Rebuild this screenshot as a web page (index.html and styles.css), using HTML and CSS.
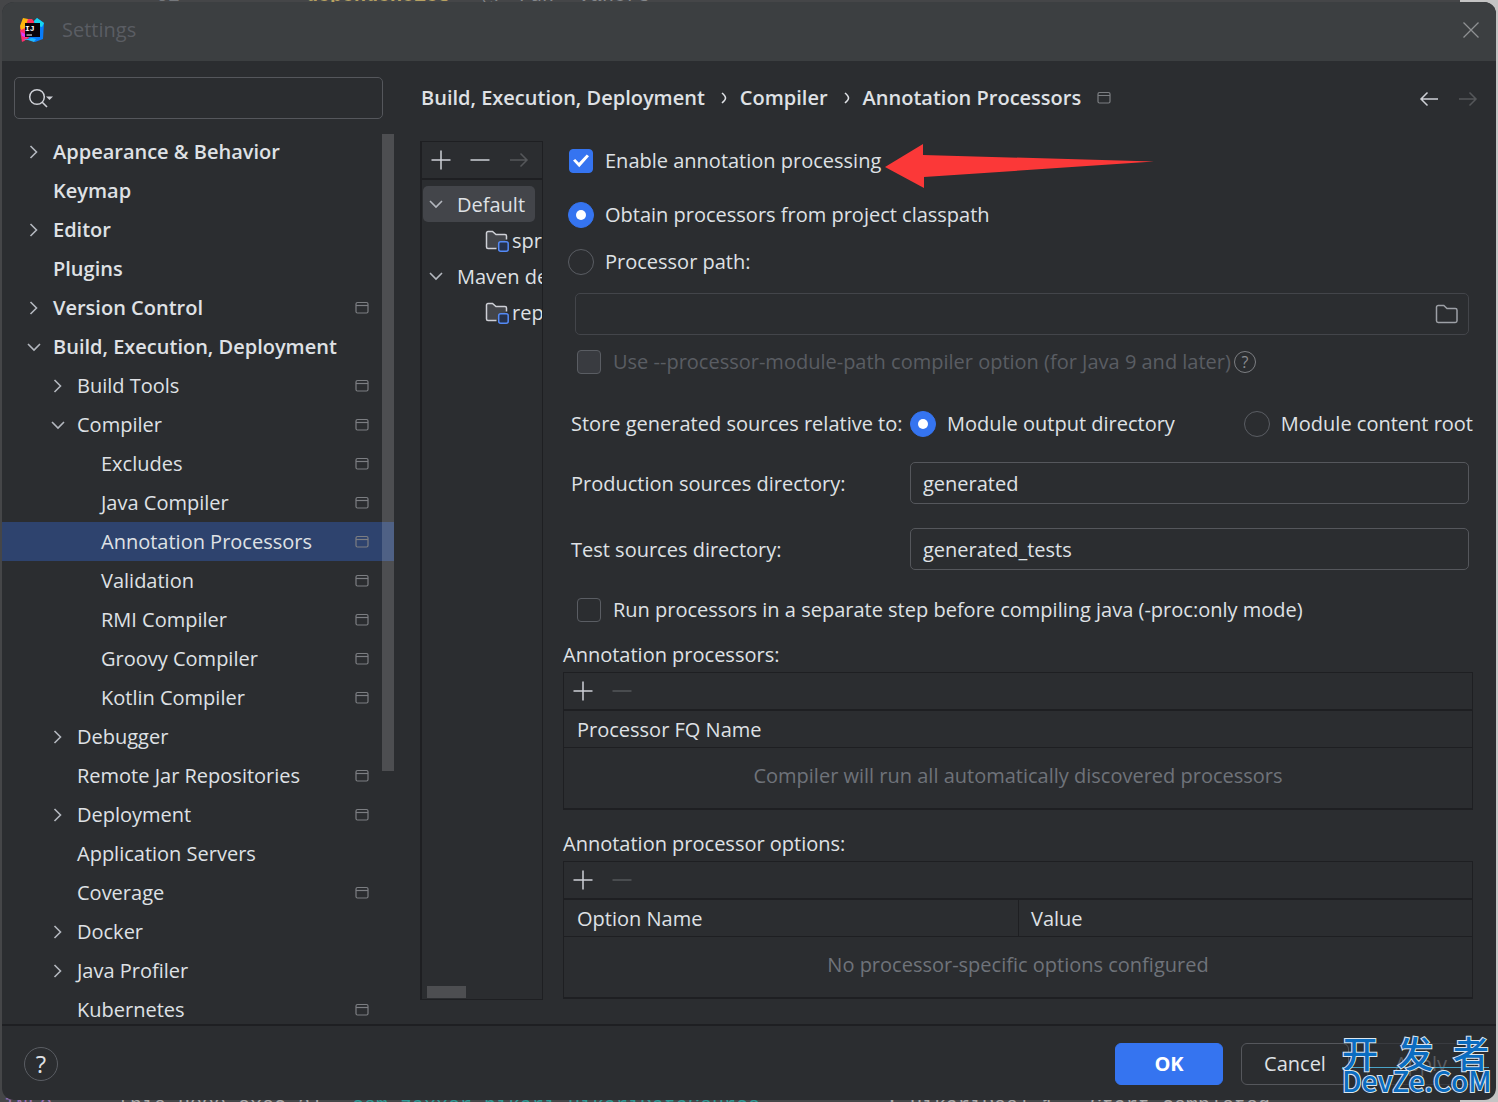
FILE: index.html
```html
<!DOCTYPE html>
<html lang="en">
<head>
<meta charset="utf-8">
<title>Settings</title>
<link rel="stylesheet" href="styles.css">
</head>
<body>
<svg class="sprite" aria-hidden="true">
  <symbol id="right" viewBox="0 0 24 24"><path d="M8.500 6l6 6-6 6" fill="none" stroke="currentColor" stroke-width="1.600"/></symbol>
  <symbol id="down" viewBox="0 0 24 24"><path d="M6 9l6 6 6-6" fill="none" stroke="currentColor" stroke-width="1.600"/></symbol>
  <symbol id="project" viewBox="0 0 14 14"><rect x="1" y="1.500" width="12" height="10.500" rx="1.500" fill="none" stroke="currentColor" stroke-width="1.200"/><path d="M1 4.500h12" stroke="currentColor" stroke-width="1.200"/></symbol>
  <symbol id="plus" viewBox="0 0 20 20"><path d="M10 .5v19M.5 10h19" stroke="currentColor" stroke-width="1.500"/></symbol>
  <symbol id="minus" viewBox="0 0 20 20"><path d="M.5 10h19" stroke="currentColor" stroke-width="1.500"/></symbol>
  <symbol id="forward" viewBox="0 0 20 20"><path d="M1 10h17M11.500 3.500l6.500 6.500-6.500 6.500" fill="none" stroke="currentColor" stroke-width="1.500"/></symbol>
  <symbol id="back" viewBox="0 0 20 20"><path d="M19 10H2M8.500 3.500L2 10l6.500 6.500" fill="none" stroke="currentColor" stroke-width="1.500"/></symbol>
  <symbol id="folder" viewBox="0 0 24 20"><path d="M1.500 3.200A1.700 1.700 0 0 1 3.200 1.500h5.600l3.200 3h8.300A1.700 1.700 0 0 1 22 6.200v10.600a1.700 1.700 0 0 1-1.700 1.700H3.200a1.700 1.700 0 0 1-1.700-1.700z" fill="none" stroke="currentColor" stroke-width="1.500"/></symbol>
  <symbol id="module" viewBox="0 0 24 22"><path d="M11.500 18.500H3A1.500 1.500 0 0 1 1.500 17V3A1.500 1.500 0 0 1 3 1.500h4.500l3.500 3h9A1.500 1.500 0 0 1 21.500 6v3.500" fill="#43454a" stroke="#ced0d6" stroke-width="1.500"/><rect x="13.700" y="11.700" width="9.500" height="9.500" rx="2" fill="#25324d" stroke="#548af7" stroke-width="1.500"/></symbol>
</svg>

<div class="editor editor-top" aria-hidden="true"><span class="line-no">62</span><span class="tag">&lt;dependencies&gt;</span><span class="hint">@/ run  vaners</span></div>
<div class="editor editor-bottom" aria-hidden="true"><span class="level">INFO</span><span class="thread">[nio-8090-exec-2]</span><span class="logger">com.zaxxer.hikari.HikariDataSource</span><span class="message">: HikariPool-1 - Start completed.</span></div>

<div class="dialog" role="dialog" aria-labelledby="dialog-title">
  <header class="titlebar">
    <svg class="logo" viewBox="0 0 24 24" aria-hidden="true">
      <path d="M3 1l9 0 4 5-4 12-9 5.500L0 10z" fill="#fe315d"/>
      <path d="M3 0l5 1L5 10 1 12 0 8z" fill="#fdb60d"/>
      <path d="M0 12l5 1 2 8-5 3z" fill="#ff2d6f"/>
      <path d="M1 14l4 2 2 4-5-2z" fill="#d73bff"/>
      <path d="M14 3l3-3 7 5-1 16-8 3-7-3 7-12z" fill="#087cfa"/>
      <path d="M14 3l3-3 7 5-2 4-7-2z" fill="#18d6ed"/>
      <path d="M3 22l9-2 4 1-2 3-6-2z" fill="#21b8ff"/>
      <rect x="5" y="5" width="15" height="14" fill="#090309"/>
      <path d="M6.500 17h5.500" stroke="#fff"/>
      <text x="5" y="13" class="logo-text">IJ</text>
    </svg>
    <h1 id="dialog-title" class="title">Settings</h1>
    <button class="icon-button close" aria-label="Close"><svg viewBox="0 0 16 16"><path d="M.5.5l15 15M15.500.5l-15 15" stroke="currentColor" stroke-width="1.300"/></svg></button>
  </header>

  <div class="content">
    <aside class="sidebar">
      <label class="search">
        <svg viewBox="0 0 26 20" aria-hidden="true"><circle cx="9" cy="9" r="7.300" fill="none" stroke="currentColor" stroke-width="1.500"/><path d="M14 14l5 5" stroke="currentColor" stroke-width="1.600"/><path d="M18 8.500h7l-3.500 3.500z" fill="currentColor"/></svg>
        <input type="text" aria-label="Search settings">
      </label>
      <nav class="tree-wrap" aria-label="Settings categories">
        <ul class="tree">
          <li><a href="#" class="node top"><svg class="chevron"><use href="#right"/></svg><span>Appearance &amp; Behavior</span></a></li>
          <li><a href="#" class="node top leaf"><span>Keymap</span></a></li>
          <li><a href="#" class="node top"><svg class="chevron"><use href="#right"/></svg><span>Editor</span></a></li>
          <li><a href="#" class="node top leaf"><span>Plugins</span></a></li>
          <li><a href="#" class="node top"><svg class="chevron"><use href="#right"/></svg><span>Version Control</span><svg class="scope"><use href="#project"/></svg></a></li>
          <li><a href="#" class="node top"><svg class="chevron"><use href="#down"/></svg><span>Build, Execution, Deployment</span></a>
            <ul class="branch">
              <li><a href="#" class="node"><svg class="chevron"><use href="#right"/></svg><span>Build Tools</span><svg class="scope"><use href="#project"/></svg></a></li>
              <li><a href="#" class="node"><svg class="chevron"><use href="#down"/></svg><span>Compiler</span><svg class="scope"><use href="#project"/></svg></a>
                <ul class="twig">
                  <li><a href="#" class="node leaf"><span>Excludes</span><svg class="scope"><use href="#project"/></svg></a></li>
                  <li><a href="#" class="node leaf"><span>Java Compiler</span><svg class="scope"><use href="#project"/></svg></a></li>
                  <li><a href="#" class="node leaf selected" aria-current="page"><span>Annotation Processors</span><svg class="scope"><use href="#project"/></svg></a></li>
                  <li><a href="#" class="node leaf"><span>Validation</span><svg class="scope"><use href="#project"/></svg></a></li>
                  <li><a href="#" class="node leaf"><span>RMI Compiler</span><svg class="scope"><use href="#project"/></svg></a></li>
                  <li><a href="#" class="node leaf"><span>Groovy Compiler</span><svg class="scope"><use href="#project"/></svg></a></li>
                  <li><a href="#" class="node leaf"><span>Kotlin Compiler</span><svg class="scope"><use href="#project"/></svg></a></li>
                </ul>
              </li>
              <li><a href="#" class="node"><svg class="chevron"><use href="#right"/></svg><span>Debugger</span></a></li>
              <li><a href="#" class="node leaf"><span>Remote Jar Repositories</span><svg class="scope"><use href="#project"/></svg></a></li>
              <li><a href="#" class="node"><svg class="chevron"><use href="#right"/></svg><span>Deployment</span><svg class="scope"><use href="#project"/></svg></a></li>
              <li><a href="#" class="node leaf"><span>Application Servers</span></a></li>
              <li><a href="#" class="node leaf"><span>Coverage</span><svg class="scope"><use href="#project"/></svg></a></li>
              <li><a href="#" class="node"><svg class="chevron"><use href="#right"/></svg><span>Docker</span></a></li>
              <li><a href="#" class="node"><svg class="chevron"><use href="#right"/></svg><span>Java Profiler</span></a></li>
              <li><a href="#" class="node leaf"><span>Kubernetes</span><svg class="scope"><use href="#project"/></svg></a></li>
            </ul>
          </li>
        </ul>
        <div class="scroll-thumb"></div>
      </nav>
    </aside>

    <main class="page">
      <div class="page-head">
        <nav class="crumbs" aria-label="Breadcrumb">
          <a href="#">Build, Execution, Deployment</a>
          <svg class="crumb-sep" viewBox="0 0 6 12"><path d="M1 1q3.500 3 3.500 5T1 11" fill="none" stroke="currentColor" stroke-width="1.600"/></svg>
          <a href="#">Compiler</a>
          <svg class="crumb-sep" viewBox="0 0 6 12"><path d="M1 1q3.500 3 3.500 5T1 11" fill="none" stroke="currentColor" stroke-width="1.600"/></svg>
          <a href="#" aria-current="page">Annotation Processors</a>
          <svg class="scope"><use href="#project"/></svg>
        </nav>
        <button class="icon-button" aria-label="Back"><svg><use href="#back"/></svg></button>
        <button class="icon-button" aria-label="Forward" disabled><svg><use href="#forward"/></svg></button>
      </div>

      <div class="columns">
        <section class="profiles" aria-label="Profiles">
          <div class="toolbar">
            <button class="icon-button" aria-label="Add profile"><svg><use href="#plus"/></svg></button>
            <button class="icon-button" aria-label="Remove profile"><svg><use href="#minus"/></svg></button>
            <button class="icon-button" aria-label="Move to" disabled><svg><use href="#forward"/></svg></button>
          </div>
          <ul class="profile-list">
            <li class="profile active"><svg class="chevron"><use href="#down"/></svg>Default</li>
            <li class="profile module"><svg class="module-icon"><use href="#module"/></svg>springboot</li>
            <li class="profile"><svg class="chevron"><use href="#down"/></svg>Maven default</li>
            <li class="profile module"><svg class="module-icon"><use href="#module"/></svg>report</li>
          </ul>
          <div class="h-thumb"></div>
        </section>

        <form class="form">
          <div class="row">
            <label class="choice"><input type="checkbox" checked>Enable annotation processing</label>
            <svg class="pointer" viewBox="0 0 270 46" aria-hidden="true"><path d="M0 23L38 0v11l231 6.500L39 33v11z" fill="#fb3838"/></svg>
          </div>
          <div class="row source"><label class="choice"><input type="radio" name="source" checked>Obtain processors from project classpath</label></div>
          <div class="row path"><label class="choice"><input type="radio" name="source">Processor path:</label></div>
          <div class="path-field">
            <input type="text" aria-label="Processor path" disabled>
            <svg><use href="#folder"/></svg>
          </div>
          <div class="row inset module-path">
            <label class="choice dim"><input type="checkbox" disabled>Use --processor-module-path compiler option (for Java 9 and later)</label>
            <button type="button" class="hint-button" aria-label="About this option">?</button>
          </div>
          <div class="row pair store">
            <span class="caption">Store generated sources relative to:</span>
            <label class="choice"><input type="radio" name="store" checked>Module output directory</label>
            <label class="choice last"><input type="radio" name="store">Module content root</label>
          </div>
          <div class="pair production"><label class="caption" for="production">Production sources directory:</label><input class="field" id="production" type="text" value="generated"></div>
          <div class="pair tests"><label class="caption" for="tests">Test sources directory:</label><input class="field" id="tests" type="text" value="generated_tests"></div>
          <div class="row inset step"><label class="choice"><input type="checkbox">Run processors in a separate step before compiling java (-proc:only mode)</label></div>

          <h2 class="group-title">Annotation processors:</h2>
          <div class="group">
            <div class="toolbar">
              <button type="button" class="icon-button" aria-label="Add processor"><svg><use href="#plus"/></svg></button>
              <button type="button" class="icon-button" aria-label="Remove processor" disabled><svg><use href="#minus"/></svg></button>
            </div>
            <table>
              <thead><tr><th>Processor FQ Name</th></tr></thead>
              <tbody><tr><td>Compiler will run all automatically discovered processors</td></tr></tbody>
            </table>
          </div>

          <h2 class="group-title second">Annotation processor options:</h2>
          <div class="group">
            <div class="toolbar">
              <button type="button" class="icon-button" aria-label="Add option"><svg><use href="#plus"/></svg></button>
              <button type="button" class="icon-button" aria-label="Remove option" disabled><svg><use href="#minus"/></svg></button>
            </div>
            <table>
              <thead><tr><th>Option Name</th><th>Value</th></tr></thead>
              <tbody><tr><td colspan="2">No processor-specific options configured</td></tr></tbody>
            </table>
          </div>
        </form>
      </div>
    </main>
  </div>

  <footer class="footer">
    <button class="help" aria-label="Help">?</button>
    <button class="button primary">OK</button>
    <button class="button">Cancel</button>
    <button class="button" disabled>Apply</button>
    <div class="watermark" lang="zh"><span class="mark-cn"><span>开</span><span>发</span><span>者</span></span><span class="mark-en">DevZe.CoM</span></div>
  </footer>
</div>
</body>
</html>
```

FILE: styles.css
```css
* { box-sizing: border-box; }

body {
  position: relative;
  height: 100vh;
  margin: 0;
  padding: 2px;
  overflow: hidden;
  background: linear-gradient(to left, #c4c4c4 38px, #454648 38px);
  color: #dfe1e5;
  font: 20px/24px "Open Sans", "Noto Sans", sans-serif;
}

button, input { font: inherit; color: inherit; }
ul { list-style: none; margin: 0; padding: 0; }
a { color: inherit; text-decoration: none; }
.sprite { position: absolute; width: 0; height: 0; }

/* Editor lines that show past the dialog's edges */
.editor {
  position: absolute;
  left: 0;
  right: 0;
  height: 24px;
  font: 20px/24px "Liberation Mono", monospace;
  white-space: pre;
}
.editor span { position: absolute; }
.editor-top { top: -16px; }
.editor-bottom { bottom: -16px; }
.line-no { left: 156px; color: #75787c; }
.tag { left: 294px; color: #b8a262; font-weight: bold; }
.hint { left: 482px; color: #85888c; }
.level { left: 4px; color: #9a6fb0; }
.thread { left: 118px; color: #a8a8a8; }
.logger { left: 352px; color: #2f9a95; }
.message { left: 886px; color: #a8a8a8; }

.dialog {
  position: relative;
  display: flex;
  flex-direction: column;
  height: 100%;
  overflow: hidden;
  border-radius: 12px;
  background: #2b2d30;
}

.titlebar {
  display: flex;
  flex: none;
  align-items: center;
  height: 59px;
  padding: 0 17px 3px 18px;
  background: #3c3f41;
}
.logo { width: 24px; height: 24px; margin-right: 18px; }
.logo-text { fill: #fff; font: bold 8px "Liberation Mono", monospace; }
.title { flex: 1; margin: 0; color: #5a5d63; font-size: 20px; font-weight: 400; }

.icon-button {
  display: flex;
  padding: 0;
  border: 0;
  background: none;
  color: #ced0d6;
}
.icon-button svg { width: 20px; height: 20px; }
.icon-button:disabled { color: #55575a; }
.icon-button.close { color: #8f9193; }
.icon-button.close svg { width: 16px; height: 16px; }

.content { display: flex; flex: 1; min-height: 0; }

.sidebar { display: flex; flex: none; flex-direction: column; width: 392px; padding-top: 16px; }
.search {
  display: flex;
  flex: none;
  align-items: center;
  height: 42px;
  margin: 0 11px 13px 12px;
  padding: 0 13px;
  border: 1px solid #55575c;
  border-radius: 5px;
}
.search svg { width: 26px; height: 20px; color: #ced0d6; }
.search input { flex: 1; min-width: 0; border: 0; outline: 0; background: none; }

.tree-wrap { position: relative; flex: 1; min-height: 0; overflow: hidden; }
.node { display: flex; align-items: center; height: 39px; padding: 0 25px 0 20px; }
.node span { flex: 1; white-space: nowrap; }
.node.leaf { padding-left: 51px; }
.branch .node { padding-left: 44px; }
.branch .node.leaf { padding-left: 75px; }
.twig .node.leaf { padding-left: 99px; }
.node.top { font-weight: 600; }
.selected { background: #2e436e; }
.chevron { flex: none; width: 24px; height: 24px; margin-right: 7px; color: #b4b8bf; }
.scope { flex: none; width: 14px; height: 14px; color: #7c7e82; }
.scroll-thumb {
  position: absolute;
  top: 2px;
  right: 0;
  width: 12px;
  height: 637px;
  background: rgba(255, 255, 255, 0.16);
}

.page { display: flex; flex: 1; flex-direction: column; min-width: 0; padding: 16px 23px 24px 26px; }
.page-head { display: flex; flex: none; align-items: center; gap: 19px; height: 42px; margin-right: -5px; padding-top: 2px; }
.crumbs { display: flex; flex: 1; align-items: center; padding: 0 0 3px 1px; font-weight: 600; }
.crumb-sep { width: 6px; height: 12px; margin: 0 13px 0 16px; }
.crumbs .scope { margin-left: 16px; }

.columns { display: flex; flex: 1; gap: 20px; min-height: 0; padding-top: 22px; }

.profiles {
  position: relative;
  flex: none;
  width: 123px;
  overflow: hidden;
  border: 1px solid #1e1f22;
  border-left-width: 2px;
}
.toolbar {
  display: flex;
  align-items: center;
  gap: 19px;
  height: 38px;
  padding-left: 9px;
  border-bottom: 2px solid #1e1f22;
}
.profile-list { padding: 6px 1px; }
.profile { display: flex; align-items: center; height: 36px; padding: 2px 0 0 1px; white-space: nowrap; }
.profile .chevron { margin: -2px 9px 0 0; }
.profile.active { width: 112px; border-radius: 5px; background: #43454a; }
.profile.module { padding-left: 62px; }
.module-icon { flex: none; width: 24px; height: 22px; margin-right: 3px; }
.h-thumb { position: absolute; bottom: 1px; left: 5px; width: 39px; height: 12px; background: #4d4e51; }

.form { flex: 1; min-width: 0; }
.row { position: relative; display: flex; align-items: center; height: 40px; padding-left: 5px; }
.choice { display: flex; align-items: center; white-space: nowrap; }
.choice input {
  display: grid;
  place-content: center;
  flex: none;
  width: 24px;
  height: 24px;
  margin: 0 12px 0 1px;
  border: 1px solid #5a5d63;
  border-radius: 4px;
  appearance: none;
}
.choice input[type="radio"] { width: 26px; height: 26px; margin: 0 11px 0 0; border-radius: 50%; }
.choice input:checked { border-color: #3574f0; background: #3574f0; }
.choice input:checked::before { content: ""; }
.choice input[type="checkbox"]:checked::before {
  width: 16px;
  height: 14px;
  background: #fff;
  clip-path: polygon(0 47%, 14% 35%, 37% 63%, 86% 3%, 100% 16%, 39% 95%);
}
.choice input[type="radio"]:checked::before { width: 10px; height: 10px; border-radius: 50%; background: #fff; }
.choice input:disabled { background: #393b40; }
.dim { color: #5a5d63; }
.pointer { position: absolute; top: 3px; left: 322px; width: 270px; height: 46px; }

.source { margin-top: 14px; }
.path { margin-top: 7px; }
.path-field {
  display: flex;
  align-items: center;
  height: 42px;
  margin: 11px 4px 7px 12px;
  padding-right: 9px;
  border: 1px solid #43454a;
  border-radius: 5px;
}
.path-field input { flex: 1; border: 0; background: none; }
.path-field svg { width: 24px; height: 20px; color: #9da0a6; }
.inset { padding-left: 13px; }
.hint-button {
  width: 22px;
  height: 22px;
  margin-left: 3px;
  padding: 0;
  border: 1px solid #7c7e82;
  border-radius: 50%;
  background: none;
  color: #8a8c90;
  font-size: 16px;
  line-height: 18px;
}
.pair { display: grid; grid-template-columns: 339px 1fr auto; align-items: center; margin-right: 4px; padding-left: 8px; }
.pair .caption { padding-top: 2px; white-space: nowrap; }
.pair .field { grid-column: 2 / 4; }
.field { width: 100%; min-width: 0; height: 42px; padding: 0 12px; border: 1px solid #55575c; border-radius: 5px; background: none; }
.store { margin: 22px 0 18px; }
.store .caption { padding-top: 0; }
.tests { margin: 24px 4px 20px 0; }

.group-title { margin: 10px 0 2px; font-size: 20px; font-weight: 400; line-height: 30px; }
.group-title.second { margin-top: 19px; }
.group { border: 1px solid #1e1f22; border-bottom-width: 2px; }
.group table { width: 100%; border-collapse: separate; border-spacing: 0; table-layout: fixed; }
.group th { height: 37px; padding: 2px 13px 0; border-bottom: 1px solid #1e1f22; text-align: left; font-weight: 400; }
.group th + th { padding-left: 12px; border-left: 1px solid #1e1f22; }
.group td { height: 60px; padding: 0 0 5px; color: #6f737a; text-align: center; }

.footer {
  position: relative;
  display: flex;
  flex: none;
  align-items: center;
  gap: 18px;
  height: 76px;
  padding: 1px 21px 0 22px;
  border-top: 2px solid #1e1f22;
}
.help {
  width: 34px;
  height: 34px;
  margin-right: auto;
  padding: 0;
  border: 1px solid #5a5d63;
  border-radius: 50%;
  background: none;
  font-size: 24px;
  line-height: 30px;
}
.button { width: 108px; height: 42px; padding: 0; border: 1px solid #55575c; border-radius: 6px; background: none; }
.button.primary { border-color: #3574f0; background: #3574f0; color: #fff; font-weight: 700; }
.button:disabled { border-color: #393b40; color: #5a5d63; }

.watermark {
  position: absolute;
  top: 11px;
  right: 7px;
  width: 147px;
  color: #0a6cc0;
  font-family: "Noto Sans CJK SC", sans-serif;
  font-weight: 500;
  -webkit-text-stroke: 2px #dce6ee;
  paint-order: stroke fill;
}
.mark-cn { display: flex; justify-content: space-between; border-bottom: 1px solid #4aa3c7; font-size: 36px; line-height: 30px; }
.mark-en { display: block; font-size: 28px; line-height: 24px; }
```
